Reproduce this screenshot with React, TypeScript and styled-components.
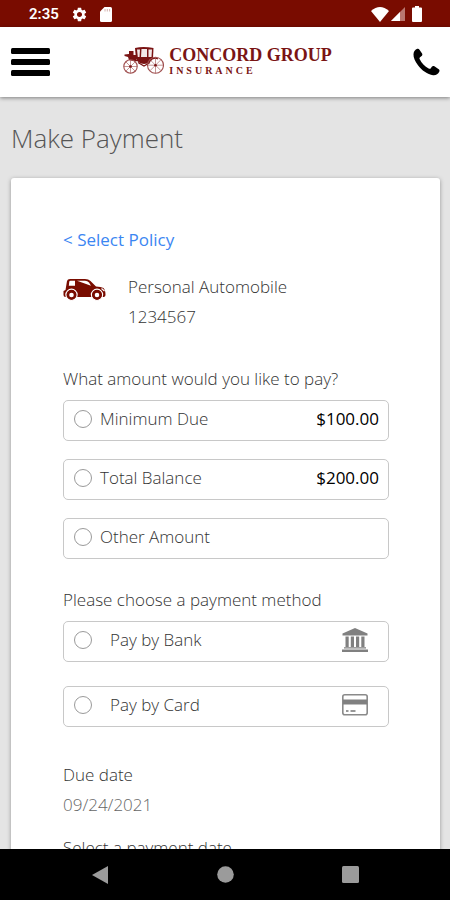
import React from "react";
import styled, { createGlobalStyle } from "styled-components";
import { MdSettings } from "react-icons/md";

const GlobalStyle = createGlobalStyle`
  *, *::before, *::after { box-sizing: border-box; }
  body {
    margin: 0;
    background: #e4e4e4;
    color: #333;
    font-family: "Open Sans", "Noto Sans", sans-serif;
    font-size: 17px;
    font-weight: 300;
    line-height: 30px;
  }
`;

const Screen = styled.div`
  display: flex;
  flex-direction: column;
  height: 100vh;
  overflow: hidden;
`;

const StatusBar = styled.div`
  display: flex;
  flex: none;
  align-items: center;
  justify-content: space-between;
  height: 27px;
  padding: 1px 28px 0 29px;
  background: #790c00;
  color: #fff;
`;

const StatusGroup = styled.div<{ $gap: number }>`
  display: flex;
  align-items: center;
  gap: ${(p) => p.$gap}px;
`;

const Clock = styled.span`
  font: 600 15px/20px Roboto, sans-serif;
`;

const Header = styled.header`
  display: flex;
  flex: none;
  align-items: center;
  justify-content: space-between;
  height: 70px;
  padding: 0 10px 0 11px;
  background: #fff;
  box-shadow: 0 1px 4px rgba(0, 0, 0, 0.45);
`;

const IconButton = styled.button`
  display: flex;
  padding: 0;
  border: 0;
  background: none;
  color: #000;
  cursor: pointer;
`;

const Brand = styled.a`
  display: flex;
  align-items: center;
  gap: 5px;
  margin: 0 8px 4px 0;
  color: #7a1414;
  text-decoration: none;
`;

const BrandText = styled.span`
  display: flex;
  flex-direction: column;
  font-family: "Liberation Serif", serif;
  font-weight: 700;
`;

const BrandName = styled.span`
  font-size: 18px;
  line-height: 20px;
`;

const BrandSub = styled.span`
  font-size: 10px;
  line-height: 11px;
  letter-spacing: 3px;
`;

const Main = styled.main`
  flex: 1;
  min-height: 0;
  padding: 26px 10px 0 11px;
  overflow: hidden;
`;

const Title = styled.h1`
  margin: 0 0 25px;
  font-size: 26px;
  font-weight: 300;
  line-height: 30px;
  color: #555;
`;

const Card = styled.form`
  padding: 47px 51px 40px 52px;
  border-radius: 3px;
  background: #fff;
  box-shadow: 0 1px 4px rgba(0, 0, 0, 0.35);
`;

const BackLink = styled.a`
  display: block;
  color: #3b86f2;
  font-weight: 400;
  text-decoration: none;
`;

const Policy = styled.div`
  display: flex;
  gap: 22px;
  margin: 17px 0 32px;

  svg { flex: none; margin-top: 6px; }
`;

const Fieldset = styled.fieldset`
  min-width: 0;
  margin: 0 0 26px;
  padding: 0;
  border: 0;
`;

const Legend = styled.legend`
  margin-bottom: 6px;
  padding: 0;
`;

const Options = styled.div<{ $gap: number }>`
  display: grid;
  gap: ${(p) => p.$gap}px;
`;

const Option = styled.label<{ $gap: number }>`
  display: flex;
  align-items: center;
  gap: ${(p) => p.$gap}px;
  height: 41px;
  padding: 0 9px 3px 10px;
  border: 1px solid #c8c8c8;
  border-radius: 5px;
  cursor: pointer;
`;

const Radio = styled.input`
  appearance: none;
  flex: none;
  width: 18px;
  height: 18px;
  margin: 0;
  border: 1px solid #9a9a9a;
  border-radius: 50%;
  background: #fff;

  &:checked { background: radial-gradient(#790c00 45%, #fff 50%); }
`;

const Amount = styled.span`
  margin-left: auto;
  color: #000;
  font-weight: 500;
`;

const MethodIcon = styled.span`
  display: flex;
  justify-content: center;
  width: 28px;
  margin: 0 10px 0 auto;
`;

const Details = styled.dl`
  margin: 33px 0 13px;

  dd { margin: 0; color: #666; }
`;

const NavBar = styled.nav`
  display: grid;
  flex: none;
  grid-template-columns: repeat(3, 125px);
  align-items: center;
  justify-content: center;
  justify-items: center;
  height: 51px;
  background: #000;
`;

const Gear = () => <MdSettings size={17} aria-hidden="true" />;

const SdCard = () => (
  <svg width="12" height="15" viewBox="0 0 12 15" fill="currentColor" aria-hidden="true">
    <path d="M4.5 0H10.5Q12 0 12 1.5V13.5Q12 15 10.5 15H1.5Q0 15 0 13.5V4.5Z" />
    <path d="M5 2v2.5M7.3 2v2.5M9.6 2v2.5" stroke="#c9a09a" strokeWidth=".8" />
  </svg>
);

const Wifi = () => (
  <svg width="18" height="15" viewBox="0 0 18 15" fill="currentColor" aria-hidden="true">
    <path d="M0 4Q9-4 18 4L9 15Z" />
  </svg>
);

const Signal = () => (
  <svg width="14" height="14" viewBox="0 0 14 14" aria-hidden="true">
    <path d="M0 14L14 0V14Z" fill="#b9776f" />
    <path d="M0 14L9 5V14Z" fill="#fff" />
  </svg>
);

const Battery = () => (
  <svg width="10" height="16" viewBox="0 0 10 16" fill="currentColor" aria-hidden="true">
    <path d="M3 0H7V1.5H9Q10 1.5 10 2.5V15Q10 16 9 16H1Q0 16 0 15V2.5Q0 1.5 1 1.5H3Z" />
  </svg>
);

const MenuIcon = () => (
  <svg width="39" height="28" viewBox="0 0 39 28" aria-hidden="true">
    <rect width="39" height="6" rx="1.5" />
    <rect y="11" width="39" height="6" rx="1.5" />
    <rect y="22" width="39" height="6" rx="1.5" />
  </svg>
);

const PhoneIcon = () => (
  <svg width="27" height="28" viewBox="0 0 28 28" aria-hidden="true">
    <path d="M4.5.3C5.500 0 6.300.5 6.900 1.500L9.400 5.300C10 6.400 9.700 7.400 8.600 8.100L7.300 9C6.600 9.600 6.600 10.300 7 11.200C8.700 14.900 12.300 18.700 16.200 20.800C17.200 21.300 17.900 21.200 18.500 20.500L19.500 19C20.200 18.100 21.200 17.900 22.200 18.500L26.300 21.200C27.500 22 27.800 23 27.200 24.200C26 26.500 23.800 28 20.800 27.700C15 27.200 9 22.700 5 17.200C2.200 13.300.3 9.200.5 6C.7 3.200 2.200 1 4.500.3Z" />
  </svg>
);

const Wheel = ({ cx, cy, r }: { cx: number; cy: number; r: number }) => {
  const d = r * 0.7;
  return (
    <g stroke="#a05050">
      <circle cx={cx} cy={cy} r={r} fill="none" strokeWidth="1.1" />
      <path
        d={`M${cx - r} ${cy}H${cx + r}M${cx} ${cy - r}V${cy + r}M${cx - d} ${cy - d}L${cx + d} ${cy + d}M${cx - d} ${cy + d}L${cx + d} ${cy - d}`}
        strokeWidth=".6"
      />
      <circle cx={cx} cy={cy} r="1.300" fill="#7a1414" stroke="none" />
    </g>
  );
};

const Carriage = () => (
  <svg width="41" height="29" viewBox="0 0 41 29" aria-hidden="true">
    <path d="M12 2Q20 0 30.500 2L30 12Q28 17.500 21 18Q15 17.500 13 13Z" fill="#7a1414" />
    <path d="M14 3.500H17L16.500 11H14.800ZM18.500 3H24V11H18ZM25.500 3.500H29L28.500 11H25.500Z" fill="#f3e9e9" />
    <path d="M1.500 8.500L6 8V5H10.500V9H13V15L6 14L5 11L1.500 10Z" fill="#7a1414" />
    <path d="M6 13Q11 15 15 14.500M26 15Q31 10.500 35 13M15 16.500L21 20L27 16.500" fill="none" stroke="#7a1414" strokeWidth="1.200" />
    <Wheel cx={7.5} cy={20.5} r={6.7} />
    <Wheel cx={32.5} cy={19.2} r={8} />
  </svg>
);

const CarIcon = () => (
  <svg width="43" height="23" viewBox="0 0 43 23" aria-hidden="true">
    <path d="M4 3Q4.500 1 7 1H22Q25.500 1 27.500 3L33 8.500Q38 8.500 40.500 10Q42.500 12 42.500 17Q42.500 18.500 41 19H2.500Q.5 19 .5 17V13L2.500 12Z" fill="#790c00" />
    <path d="M5.800 7.700L6.300 3.500Q6.500 2.700 7.500 2.700H12V7.700ZM14 2.700H22Q24.500 2.700 26 4.500L28 7.700Z" fill="#fff" />
    <g fill="#790c00" stroke="#fff" strokeWidth="1.200">
      <circle cx="8.500" cy="16.800" r="5.600" />
      <circle cx="34" cy="16.800" r="5.600" />
    </g>
    <g fill="#fff" stroke="#790c00" strokeWidth="2.400">
      <circle cx="8.500" cy="17" r="3.500" />
      <circle cx="34" cy="17" r="3.500" />
    </g>
    <path d="M38.500 10.500L41.500 13" stroke="#fff" strokeWidth="1.200" />
  </svg>
);

const BankIcon = () => (
  <svg width="26" height="24" viewBox="0 0 26 24" fill="#808080" aria-hidden="true">
    <path d="M13 0L25.500 5.500V7.500H.5V5.500Z" />
    <path d="M3.500 8.500h3.200v10.500h-3.200zM8.800 8.500h3.200v10.500h-3.200zM14 8.500h3.200v10.500h-3.200zM19.300 8.500h3.200v10.500h-3.200zM2 19.200h22v1.300H2zM0 21.500h26v2.500H0z" />
  </svg>
);

const CardIcon = () => (
  <svg width="26" height="22" viewBox="0 0 26 22" aria-hidden="true">
    <rect x=".8" y=".8" width="24.400" height="19.900" rx="2" fill="#fff" stroke="#8a8a8a" strokeWidth="1.600" />
    <path d="M1 5.500H25V10.500H1Z" fill="#808080" />
    <path d="M4 17h2.500M8.500 17h5" stroke="#777" strokeWidth="1.600" />
  </svg>
);

const amounts = [
  { id: "minimum", label: "Minimum Due", value: "$100.00" },
  { id: "total", label: "Total Balance", value: "$200.00" },
  { id: "other", label: "Other Amount", value: "" },
];

const methods = [
  { id: "bank", label: "Pay by Bank", icon: <BankIcon /> },
  { id: "card", label: "Pay by Card", icon: <CardIcon /> },
];

export default function App() {
  return (
    <Screen>
      <GlobalStyle />
      <StatusBar>
        <StatusGroup $gap={12}>
          <Clock>2:35</Clock>
          <Gear />
          <SdCard />
        </StatusGroup>
        <StatusGroup $gap={2}>
          <Wifi />
          <StatusGroup $gap={7}>
            <Signal />
            <Battery />
          </StatusGroup>
        </StatusGroup>
      </StatusBar>
      <Header>
        <IconButton type="button" aria-label="Menu"><MenuIcon /></IconButton>
        <Brand href="#home">
          <Carriage />
          <BrandText>
            <BrandName>CONCORD GROUP</BrandName>
            <BrandSub>INSURANCE</BrandSub>
          </BrandText>
        </Brand>
        <IconButton type="button" aria-label="Call"><PhoneIcon /></IconButton>
      </Header>
      <Main>
        <Title>Make Payment</Title>
        <Card>
          <BackLink href="#policies">&lt; Select Policy</BackLink>
          <Policy>
            <CarIcon />
            <div>
              <div>Personal Automobile</div>
              <div>1234567</div>
            </div>
          </Policy>
          <Fieldset>
            <Legend>What amount would you like to pay?</Legend>
            <Options $gap={18}>
              {amounts.map((a) => (
                <Option key={a.id} $gap={8}>
                  <Radio type="radio" name="amount" value={a.id} />
                  <span>{a.label}</span>
                  {a.value && <Amount>{a.value}</Amount>}
                </Option>
              ))}
            </Options>
          </Fieldset>
          <Fieldset>
            <Legend>Please choose a payment method</Legend>
            <Options $gap={24}>
              {methods.map((m) => (
                <Option key={m.id} $gap={18}>
                  <Radio type="radio" name="method" value={m.id} />
                  <span>{m.label}</span>
                  <MethodIcon>{m.icon}</MethodIcon>
                </Option>
              ))}
            </Options>
          </Fieldset>
          <Details>
            <dt>Due date</dt>
            <dd>09/24/2021</dd>
          </Details>
          <div>Select a payment date</div>
        </Card>
      </Main>
      <NavBar>
        <IconButton type="button" aria-label="Back">
          <svg width="16" height="18" viewBox="0 0 16 18"><path d="M16 0V18L0 9Z" fill="#9b9b9b" /></svg>
        </IconButton>
        <IconButton type="button" aria-label="Home">
          <svg width="17" height="17" viewBox="0 0 17 17"><circle cx="8.500" cy="8.500" r="8.300" fill="#9b9b9b" /></svg>
        </IconButton>
        <IconButton type="button" aria-label="Recent apps">
          <svg width="17" height="17" viewBox="0 0 17 17"><rect width="17" height="17" rx="1.500" fill="#9b9b9b" /></svg>
        </IconButton>
      </NavBar>
    </Screen>
  );
}
